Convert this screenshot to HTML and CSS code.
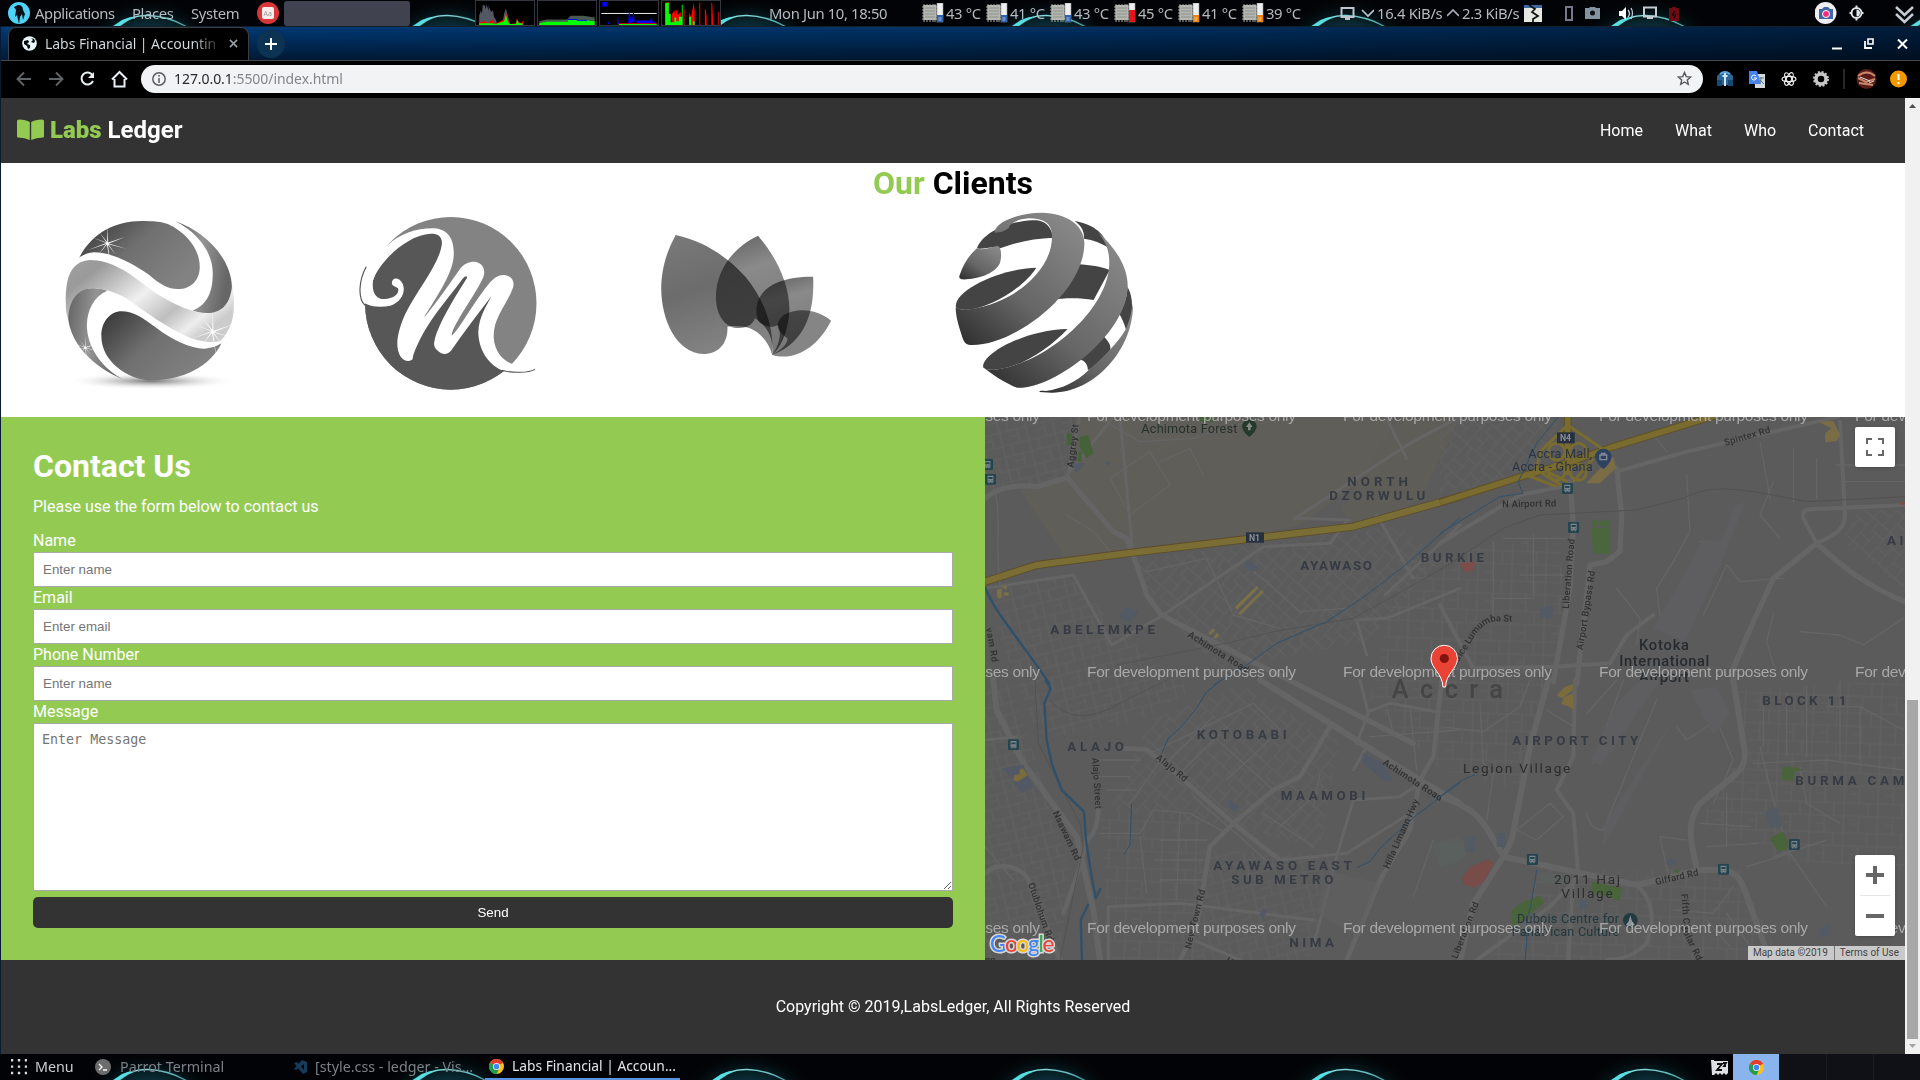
FILE: index.html
```html
<!DOCTYPE html>
<html lang="en">
<head>
<meta charset="utf-8">
<title>Labs Financial | Accounting</title>
<link rel="stylesheet" href="styles.css">
</head>
<body>
<svg class="defs" width="0" height="0" aria-hidden="true">
  <defs>
    <radialGradient id="halo"><stop offset=".45" stop-color="#0b2a36"/><stop offset=".62" stop-color="#06262b" stop-opacity=".75"/><stop offset="1" stop-color="#020a10" stop-opacity="0"/></radialGradient>
    <linearGradient id="ring" x1="0" x2="1"><stop offset="0" stop-color="#63f0f4"/><stop offset=".35" stop-color="#8ce0e2"/><stop offset="1" stop-color="#4fa5ab"/></linearGradient>
    <pattern id="wall" width="299.6" height="26" patternUnits="userSpaceOnUse">
      <rect width="300" height="26" fill="#020306"/>
      <ellipse cx="149" cy="45" rx="66" ry="46" fill="url(#halo)"/>
      <path d="M113 27Q130 15 148 15.500Q168 16 187 27" fill="none" stroke="url(#ring)" stroke-width="1.300"/>
      <path d="M112 27L122 20Q129 17 136 17Q126 21 119 27Z" fill="#58dfe3"/>
    </pattern>
    <symbol id="chip" viewBox="0 0 22 20">
      <path d="M2 1v18M5 1v18M8 1v18M11 1v18M13 1v18M0 4h15M0 7h15M0 10h15M0 13h15M0 16h15" stroke="#aaa" stroke-width="1"/>
      <rect x="1.500" y="2" width="13" height="15" fill="#b4b6b0"/><path d="M3 5h10M3 8h10M3 11h10M3 14h10" stroke="#8e908a"/>
      <rect x="15" y="0" width="6" height="19" fill="#eee" stroke="#999" stroke-width=".6"/>
      <path d="M15 12h6v7h-6z" fill="currentColor"/><path d="M16.500 14h3v4h-3z" fill="#fff" opacity=".3"/>
    </symbol>
    <symbol id="chrome" viewBox="0 0 16 16">
      <circle cx="8" cy="8" r="8" fill="#fbc116"/><path d="M8 8L1 4A8 8 0 0 1 15 4z" fill="#e33b2e"/><path d="M8 8L1 4A8 8 0 0 0 8 16L11 10z" fill="#229a4f"/><circle cx="8" cy="8" r="3.800" fill="#fff"/><circle cx="8" cy="8" r="3" fill="#4285f4"/>
    </symbol>
    <symbol id="bus" viewBox="0 0 34 34"><rect width="34" height="34" rx="4" fill="#24444f"/><path d="M8 6h18v20h-3v3h-3v-3h-6v3h-3v-3H8z" fill="#7f8588"/><path d="M10.500 10h13v6h-13z M11 20h3v3h-3z M20 20h3v3h-3z" fill="#24444f"/></symbol>
  </defs>
</svg>

<header class="panel panel-top">
  <svg class="wall"><rect width="1920" height="26" fill="url(#wall)"/></svg>
  <svg class="ico" width="22" height="22" viewBox="0 0 22 22"><circle cx="11" cy="11" r="11" fill="#4ed2f7"/><path d="M6 5L10 3Q15 3 15 8L17 12L15 18L14 12L12 15L11 22L9 13L7 15L8 8Z" fill="#071018"/></svg>
  <span class="fit">Applications</span>
  <span>Places</span>
  <span>System</span>
  <svg class="ico" width="22" height="22" viewBox="0 0 22 22"><circle cx="11" cy="11" r="11" fill="#d9363a"/><rect x="5" y="5" width="12" height="12" rx="2" fill="#f7ecec"/><text x="6.500" y="13.500" font-size="7" letter-spacing="0" fill="#999">Aa</text></svg>
  <i class="slot"></i>
  <svg class="graph" viewBox="0 0 60 26"><path d="M2 26V16L4 10L5 14L6 4L8 5L9 9L10 3L11 8L12 4V11L13 7L15 12L17 10L18 17L20 20L22 26M27 26L29 14L31 8L32 12L34 20L36 26" fill="#545864"/><path d="M2 26V23L8 22L12 24L16 20L19 25L29 20L31 13L32 16L34 21L36 25L42 24L43 18L44 22L48 24L50 20V26Z" fill="#f00"/><path d="M2 26V24L16 24L20 25L29 22L31 15L33 22L35 25L42 25L43 20L45 24L49 24V26Z" fill="#0f0"/></svg>
  <svg class="graph" viewBox="0 0 60 26"><path d="M0 22L8 20H30L34 16H48L60 18V26H0Z" fill="#4a5a50"/><path d="M0 24L8 22.500H31V20.500H45L60 22V26H0Z" fill="#0f0"/><path d="M31 20h10v1h10v1" stroke="#00f" fill="none"/></svg>
  <svg class="graph" viewBox="0 0 60 26"><path d="M0 13.500H60" stroke="#fff"/><path d="M1 1h5v5h-5zM7 25l1-3l1 3zM17 25l1-9l1 9zM29 25l1-15l1 5l2 8l2-14l1 12l3 3h21l-5-3l-1-4l-1 4H38" fill="#00f"/><path d="M19 24h41v1H19z" fill="#f00"/><path d="M19 25h41v1H19z" fill="#0f0"/></svg>
  <svg class="graph" viewBox="0 0 60 26"><path d="M3 26V2H5V1H6V26M9 26V15L12 10L13 15L14 9L16 15L19 12V26M22 26V9H23V26M28 26V12L30 17L33 2L34 12V26M39 26V2h1V26M45 26V9h1l1 9v8M52 26V2h1l1 20v4M59 26V12h1v14" fill="#f00"/><path d="M2 26V2H6V14H8V23H12V18H14V22H17V17H20V4H21V26M28 26V17H30V26M32 22h2v4h-2" fill="#0f0"/></svg>
  <span class="clock">Mon Jun 10, 18:50</span>
  <svg class="chip blue"><use href="#chip"/></svg><span>43 °C</span>
  <svg class="chip blue"><use href="#chip"/></svg><span>41 °C</span>
  <svg class="chip blue"><use href="#chip"/></svg><span>43 °C</span>
  <svg class="chip red"><use href="#chip"/><path d="M15 7h6v12h-6z" fill="#e3141c"/></svg><span>45 °C</span>
  <svg class="chip orange"><use href="#chip"/></svg><span>41 °C</span>
  <svg class="chip orange"><use href="#chip"/></svg><span>39 °C</span>
  <svg class="ico" width="34" height="20" viewBox="0 0 34 20" fill="none" stroke="#bcc5ce" stroke-width="2"><path d="M1.500 5h12v9h-12zM5 16h5"/><path d="M22 7l6 6l6-6" stroke-width="1.700"/></svg>
  <span class="rate">16.4 KiB/s</span>
  <svg class="ico" width="12" height="20" viewBox="0 0 12 20" fill="none" stroke="#aab" stroke-width="1.700"><path d="M0 13l6-6l6 6"/></svg>
  <span class="rate">2.3 KiB/s</span>
  <svg class="ico" width="18" height="17" viewBox="0 0 18 17"><path d="M0 0h18v17H0z" fill="#e8e8e2"/><path d="M0 0h18v3H0z" fill="#3d6aa6"/><path d="M5 0l6 4l-3 3l6 4l-5 3v3" fill="none" stroke="#111" stroke-width="1.700"/></svg>
  <svg class="ico" width="120" height="22" viewBox="0 0 120 22" fill="none" stroke="#c5ccd2" stroke-width="2"><path d="M1 5h6v13H1z" stroke="#778"/><path d="M20 6h4l1-1h5l1 1h4v11H20z" fill="#8493a0" stroke="none"/><circle cx="27.500" cy="11" r="2.500" fill="#111" stroke="none"/><path d="M54 9h3l4-4v13l-4-4h-3z" fill="#fff" stroke="none"/><path d="M63 8q3 4 0 7M66 6q3 5 0 11" stroke-width="1.300"/><path d="M79 5.500h12v9h-12zM82 16h6"/><path d="M104 6h3v-1h4v1h3v13h-10z" fill="#6c0c12" stroke="none"/><path d="M110 9l-3 4h4l-3 4" stroke="#000" stroke-width="1"/></svg>
  <svg class="ico" width="100" height="24" viewBox="0 0 100 24"><circle cx="10.500" cy="12" r="11" fill="#f0eef2"/><path d="M4 8h3l2-2h4l2 2h3v10H4z" fill="#4166a6"/><circle cx="11" cy="13" r="3.500" fill="#f02b80" stroke="#fff"/><circle cx="41.500" cy="12" r="5" fill="none" stroke="#dfe5ea" stroke-width="2"/><path d="M41.500 4.500v2M41.500 17.500v2M34.500 12h2M46.500 12h2" stroke="#dfe5ea" stroke-width="2"/><path d="M41.500 8.500v7a3.500 3.500 0 0 0 0-7" fill="#dfe5ea"/><path d="M81 6l8.500 8l8.500-8M81 13l8.500 8l8.500-8" stroke="#c4ccd4" stroke-width="2.500" fill="none"/></svg>
</header>

<div class="window">
  <div class="tabs">
    <div class="tab">
      <svg width="15" height="15" viewBox="0 0 15 15"><circle cx="7.500" cy="7.500" r="7.300" fill="#e9f6fa"/><path d="M2 5L6 4L7 6L5 8L8 9L8 12L6 13L5 10L2 8ZM9 2L11 4L9 6L12 7L13 5L12 3Z" fill="#050a10"/></svg>
      <span>Labs Financial | Accountin</span>
      <svg width="9" height="9" viewBox="0 0 10 10"><path d="M1 1l8 8M9 1l-8 8" stroke="#9aa0a6" stroke-width="1.700"/></svg>
    </div>
    <svg class="plus" width="28" height="28" viewBox="0 0 28 28"><circle cx="14" cy="14" r="14" fill="#0d3352"/><path d="M14 8v12M8 14h12" stroke="#fff" stroke-width="2"/></svg>
    <svg class="winbtns" width="76" height="12" viewBox="0 0 76 12" fill="none" stroke="#fff" stroke-width="2"><path d="M0 10.500h10"/><path d="M36 1h5v5h-5z" stroke-width="1.600"/><path d="M33 3v7h7" stroke-width="1.800"/><path d="M66 1.500l9 9M75 1.500l-9 9"/></svg>
  </div>
  <div class="toolbar">
    <svg width="112" height="18" viewBox="0 0 112 18" fill="none" stroke-width="2"><path d="M15 9H2M8 2.500L1.500 9L8 15.500M33 9h13M40 2.500L46.500 9L40 15.500" stroke="#626567" stroke-width="1.900"/><path d="M76.500 5A6 6 0 1 0 77 11" stroke="#e8f0f4"/><path d="M78 2v6h-6z" fill="#e8f0f4"/><path d="M96 9.500L103.500 2L111 9.500M98.500 9v7.500h10V9" stroke="#e8f0f4" stroke-width="2"/></svg>
    <div class="address">
      <svg width="14" height="14" viewBox="0 0 14 14" fill="none" stroke="#5a5e62" stroke-width="1.500"><circle cx="7" cy="7" r="6.200"/><path d="M7 6v5M7 3v1.700"/></svg>
      <span>127.0.0.1<em>:5500/index.html</em></span>
      <svg class="star" width="15" height="15" viewBox="0 0 15 15"><path d="M7.500 1.500l1.800 4.100 4.400.4-3.400 2.900 1 4.400-3.800-2.300-3.800 2.300 1-4.400L1.300 6l4.400-.4z" fill="none" stroke="#55595d" stroke-width="1.400"/></svg>
    </div>
    <svg class="ext" width="192" height="22" viewBox="0 0 192 22">
      <path d="M0 8Q8 0 16 8V17H0Z" fill="#2d6695"/><path d="M3 6Q8 2 13 6" stroke="#58a8e8" stroke-width="2" fill="none"/><path d="M0 12h5v6H0zM11 12h5v6h-5z" fill="#174a72"/><path d="M8 5v13M5.500 8h5" stroke="#cdeaff" stroke-width="2"/>
      <path d="M38 6h10v14H38z" fill="#d5d9dd"/><path d="M32 3h8l4 13H32z" fill="#4384ee"/><path d="M39 8a2.500 2.500 0 1 0 .5 2h-2.500" stroke="#fff" fill="none"/><path d="M42 10h5M44 9v2q0 3-2 5M43 12l4 4" stroke="#677" fill="none"/>
      <g fill="none" stroke="#eee" stroke-width="1.200"><ellipse cx="72" cy="11" rx="7" ry="2.700"/><ellipse cx="72" cy="11" rx="7" ry="2.700" transform="rotate(60 72 11)"/><ellipse cx="72" cy="11" rx="7" ry="2.700" transform="rotate(120 72 11)"/></g>
      <circle cx="104" cy="11" r="5" fill="none" stroke="#c8c8c8" stroke-width="3.500"/><circle cx="104" cy="11" r="7" fill="none" stroke="#c8c8c8" stroke-width="2" stroke-dasharray="2 1.700"/>
      <path d="M127 1v20" stroke="#3c4043" stroke-width="1.300"/>
      <circle cx="149.500" cy="11" r="10" fill="#5c1a1a"/><path d="M141 8Q150 1 158 8M141 10l8 4l9-3M142 15l14 2" stroke="#c88a6a" stroke-width="2" fill="none"/><path d="M143 9l10 4M152 15l5-2" stroke="#ddd"/>
      <circle cx="181.500" cy="11" r="8.500" fill="#f29900"/><path d="M181.500 6v6M181.500 14v2" stroke="#fff" stroke-width="2"/>
    </svg>
  </div>

  <div class="viewport">
    <div class="page">
      <nav class="nav">
        <h1 class="brand"><svg width="27" height="21" viewBox="0 0 27 21"><path d="M0 2Q0 .7 2 .6Q9 .8 12.800 3V21Q8 18.500 1 18.500Q0 18.500 0 17ZM27 2Q27 .7 25 .6Q18 .8 14.200 3V21Q19 18.500 26 18.500Q27 18.500 27 17Z" fill="#93cb52"/></svg><span><b class="green">Labs</b> Ledger</span></h1>
        <div class="links"><a>Home</a><a>What</a><a>Who</a><a>Contact</a></div>
      </nav>

      <section class="clients">
        <h2><span class="green">Our</span> Clients</h2>
        <div class="logos">
          <svg viewBox="2.600 30 784 651" preserveAspectRatio="none">
            <defs>
              <linearGradient id="a1" x1="0" y1="0" x2="1" y2=".6"><stop offset="0" stop-color="#333"/><stop offset=".5" stop-color="#707070"/><stop offset="1" stop-color="#828282"/></linearGradient>
              <linearGradient id="a2" x1="0" y1="0" x2="1" y2=".6"><stop offset="0" stop-color="#a0a0a0"/><stop offset=".18" stop-color="#9a9a9a"/><stop offset=".3" stop-color="#b8b8b8"/><stop offset=".52" stop-color="#f0f0f0"/><stop offset=".74" stop-color="#bebebe"/><stop offset=".9" stop-color="#eee"/><stop offset="1" stop-color="#ccc"/></linearGradient>
              <linearGradient id="a3" x1="0" y1="0" x2="1" y2=".25"><stop offset="0" stop-color="#606060"/><stop offset=".5" stop-color="#959595"/><stop offset="1" stop-color="#666"/></linearGradient>
              <radialGradient id="a4"><stop offset="0" stop-color="#777"/><stop offset=".5" stop-color="#ccc" stop-opacity=".7"/><stop offset="1" stop-color="#fff" stop-opacity="0"/></radialGradient>
              <path id="spark" d="M0-62L2-3L54-22L4 1L60 20L3 3L25 40L1 5L10 80L-2 4L-28 40L-4 2L-62 24L-4-1L-50-22L-3-3L-25-38L-1-5Z"/>
            </defs>
            <ellipse cx="395" cy="573" rx="225" ry="26" fill="url(#a4)"/>
            <path fill="url(#a1)" d="M207 203C240 130 300 93 370 93C400 93 425 95 440 103C490 130 522 180 522 230C522 270 500 297 465 297C440 297 420 285 390 255C340 215 290 187 245 187C230 189 215 195 207 203Z"/>
            <path fill="url(#a2)" d="M172 340C171 260 185 215 235 210C290 210 340 250 380 287C430 330 480 355 503 362C515 368 530 369 545 369C580 366 600 335 606 285C612 310 612 345 610 370C607 405 590 440 575 453C560 460 520 455 490 440C430 410 380 365 330 325C290 300 260 294 240 295C205 298 185 330 177 385C173 370 172 355 172 340Z"/>
            <path fill="url(#a3)" d="M458 94C540 125 605 210 606 290C602 340 580 370 540 369C525 368 515 365 503 362C540 345 556 310 556 250C556 190 520 130 458 94Z"/>
            <path fill="url(#a3)" d="M178 385C182 320 210 296 240 295C255 294 268 297 280 302C245 320 228 360 227 405C227 470 265 535 325 570C240 530 185 460 178 385Z"/>
            <path fill="url(#a1)" d="M265 440C263 395 290 364 317 364C350 364 375 385 410 415C450 450 500 477 535 476C555 474 570 466 579 460C550 530 475 571 400 571C330 571 265 510 265 440Z"/>
            <g fill="#fff"><use href="#spark" transform="translate(281 160) scale(.85)"/><use href="#spark" transform="translate(556 425)"/><use href="#spark" transform="translate(223 473) scale(.55)"/></g>
          </svg>
          <svg viewBox="786.600 30 784 651" preserveAspectRatio="none">
            <clipPath id="disc"><ellipse cx="1178" cy="340" rx="224" ry="259"/></clipPath>
            <ellipse cx="1178" cy="340" rx="224" ry="259" fill="#838383"/>
            <path clip-path="url(#disc)" fill="#575757" d="M1005 175C1060 110 1150 110 1168 150L1165 220L1110 380L1215 250L1235 260L1180 440L1285 310L1270 420C1275 480 1300 510 1340 530L1310 550L1300 640H940V175Z"/>
            <path d="M935 215L1012 165L985 240L950 350L935 345Z" fill="#fff"/>
            <path fill="#fff" d="M1010 168C1045 130 1090 114 1135 115C1175 118 1190 155 1185 205C1180 260 1130 340 1108 382C1130 355 1170 290 1200 240C1215 215 1235 213 1245 216C1262 222 1270 240 1263 262C1240 320 1190 390 1180 437C1200 420 1230 350 1275 285C1290 262 1305 254 1318 255C1338 258 1345 272 1341 292C1325 345 1290 380 1290 440C1292 490 1320 515 1340 522C1362 537 1385 543 1398 538C1370 548 1340 549 1312 541C1270 520 1250 470 1250 425C1252 380 1270 350 1285 317C1250 370 1210 430 1180 480C1170 495 1160 493 1152 489C1140 480 1132 470 1135 455C1145 400 1190 320 1220 265C1222 253 1212 260 1205 272C1165 335 1110 400 1080 495L1078 508C1070 517 1055 513 1047 500C1030 470 1040 420 1060 370C1090 300 1150 220 1155 160C1155 135 1140 130 1125 131C1060 135 990 220 975 270C970 310 985 328 1005 327C1030 326 1045 310 1040 295C1035 290 1025 290 1024 280C1024 265 1035 262 1045 270C1065 290 1055 335 1020 347C985 355 950 348 942 325C935 290 960 210 1010 168Z"/>
            <path d="M957 230C938 270 934 325 954 346M1312 541C1340 550 1380 549 1398 538" fill="none" stroke="#555" stroke-width="3"/>
          </svg>
          <svg viewBox="2.600 120 784 651" preserveAspectRatio="none" class="leaf">
            <defs><linearGradient id="l1" x1="0" y1="0" x2=".3" y2="1"><stop offset="0" stop-color="#7a7a7a"/><stop offset=".5" stop-color="#6c6c6c"/><stop offset="1" stop-color="#828282"/></linearGradient>
            <linearGradient id="l2" x1="0" y1="0" x2=".2" y2="1"><stop offset="0" stop-color="#606060"/><stop offset=".35" stop-color="#8a8a8a"/><stop offset="1" stop-color="#777"/></linearGradient></defs>
            <path fill="url(#l1)" d="M198 225C280 245 340 300 380 350C430 420 455 500 450 585C440 540 410 505 375 500C355 497 340 497 333 500C335 550 310 582 270 582C200 580 160 480 160 385C160 320 180 260 198 225Z"/>
            <path fill="url(#l2)" d="M413 227C460 290 495 370 495 450C492 520 470 565 450 585C455 540 440 500 405 475C395 505 370 505 350 503C320 495 302 455 303 410C303 330 350 260 413 227Z"/>
            <path fill="url(#l2)" d="M557 350C560 430 550 540 450 585C470 550 475 520 465 495C450 505 430 500 415 485C400 450 400 350 557 350Z"/>
            <path fill="#858585" d="M604 482C570 560 510 605 450 585C480 565 490 550 490 535C460 510 455 490 480 465C520 440 570 450 604 482Z"/>
          </svg>
          <svg viewBox="786.600 120 784 651" preserveAspectRatio="none">
            <defs><linearGradient id="g1" x1="0" y1="1" x2=".8" y2="0"><stop offset="0" stop-color="#2b2b2b"/><stop offset=".45" stop-color="#666"/><stop offset="1" stop-color="#878787"/></linearGradient></defs>
            <g fill="#444">
              <path d="M985 265C1000 220 1060 185 1130 181C1150 180 1170 185 1180 215L1185 233C1130 235 1080 250 1045 265C1030 255 1000 270 985 265Z"/>
              <path d="M1240 183C1280 190 1320 215 1327 262C1310 250 1290 240 1265 236C1266 210 1255 195 1240 183Z"/>
              <path d="M1250 313C1280 315 1310 320 1332 330L1290 420C1250 412 1210 415 1180 419C1210 390 1240 350 1250 313Z"/>
              <path d="M1378 380C1395 410 1395 470 1375 510C1370 490 1362 470 1357 462C1370 435 1378 410 1378 380Z"/>
              <path d="M1315 528C1330 545 1340 560 1330 580C1310 600 1290 625 1275 630C1275 610 1262 598 1248 598C1275 575 1297 555 1315 528Z"/>
              <path d="M930 440C925 390 1050 325 1140 323C1110 380 1020 445 960 449C945 450 932 447 930 440Z"/>
              <path d="M1001 620C1000 580 1110 510 1222 507C1170 570 1090 630 1025 629C1010 628 1003 626 1001 620Z"/>
            </g>
            <g fill="url(#g1)">
              <path d="M1032 218C1028 190 1090 158 1155 158C1220 160 1265 195 1266 250C1265 400 1080 560 968 555C955 555 950 545 945 525C935 490 928 460 930 440C935 450 955 450 970 447C1080 430 1185 330 1181 225C1180 190 1160 175 1120 175C1090 178 1070 190 1068 205C1055 215 1045 218 1032 218Z"/>
              <path d="M985 265C1000 272 1020 262 1040 257C1050 265 1050 290 1045 310C1030 345 980 360 945 358C938 355 938 350 940 345C950 310 965 285 985 265Z"/>
              <path d="M1300 215C1345 260 1380 320 1379 380C1375 530 1180 690 1090 683C1060 670 1020 640 1001 620C1005 630 1025 630 1045 627C1180 600 1345 430 1330 290C1328 260 1315 235 1300 215Z"/>
              <path d="M1393 430C1395 570 1290 700 1180 698L1148 696C1148 692 1155 692 1165 693C1210 685 1245 665 1275 632C1330 580 1365 530 1375 505C1385 480 1390 450 1393 430Z"/>
            </g>
          </svg>
        </div>
      </section>

      <section class="contact">
        <form class="form">
          <h2>Contact Us</h2>
          <p>Please use the form below to contact us</p>
          <label>Name</label><input type="text" placeholder="Enter name">
          <label>Email</label><input type="text" placeholder="Enter email">
          <label>Phone Number</label><input type="text" placeholder="Enter name">
          <label>Message</label><textarea placeholder="Enter Message"></textarea>
          <button type="button">Send</button>
        </form>
        <div class="map">
          <svg class="tiles" viewBox="985 417 920 543">
            <defs>
              <pattern id="s1" width="31" height="22" patternUnits="userSpaceOnUse" patternTransform="rotate(-48)"><path d="M0 1H31M1 0V22M12 1V14M22 8V22M1 13H22M22 8H31" class="lane"/></pattern>
              <pattern id="s2" width="27" height="25" patternUnits="userSpaceOnUse" patternTransform="rotate(-14)"><path d="M0 1H27M1 0V25M10 1V12M19 12V25M1 12H27M10 18H19" class="lane"/></pattern>
              <pattern id="s3" width="34" height="30" patternUnits="userSpaceOnUse" patternTransform="rotate(2)"><path d="M0 1H34M1 0V30M16 1V18M25 18V30M1 18H34M8 9H16" class="lane"/></pattern>
              <path id="lumumba" d="M38 770L100 670Q128 622 165 619L250 620"/>
            </defs>
            <rect x="985" y="417" width="920" height="543" fill="#5b5b5b"/>
            <path d="M1075 417H1390L1402 450L1300 525L1240 540L1065 557L1020 490L1060 480L1077 460Z" fill="#605e59"/>
            <path d="M1400 417H1460L1420 500L1360 530L1340 510Z" fill="#5f5d58"/>
            <path d="M985 417H1075L1068 478L1000 490L985 480Z" fill="url(#s2)"/>
            <path d="M1135 560L1400 525L1440 560L1370 640L1220 670L1150 600Z" fill="url(#s1)"/>
            <path d="M990 590L1070 575L1130 640L1190 690L1140 720L1040 740L1000 640Z" fill="url(#s2)"/>
            <path d="M1150 720L1240 685L1340 740L1320 850L1250 830L1110 810Z" fill="url(#s1)"/>
            <path d="M1100 810L1200 820L1195 960H1110Z" fill="url(#s3)"/>
            <path d="M1200 850L1335 855L1310 960H1190Z" fill="url(#s2)"/>
            <path d="M985 690L1010 680L1070 870L1060 960H985Z" fill="url(#s2)"/>
            <path d="M1400 560L1560 535L1565 620L1520 790L1440 770L1370 700Z" fill="url(#s3)"/>
            <path d="M1730 690L1905 680V870L1790 860L1700 820L1750 740Z" fill="url(#s3)"/>
            <path d="M1860 510H1905V590L1840 540Z" fill="url(#s1)"/>
            <path d="M1545 870L1740 870L1780 960H1480Z" fill="url(#s3)"/>
            <path d="M1440 417H1560L1540 470L1440 500Z" fill="url(#s1)"/>

            <!-- north-west quarter -->
            <g transform="translate(980 415) scale(.33333)">
              <path class="road" stroke-width="16" d="M15 250C60 210 130 210 170 215L262 188L400 350L440 370L470 450L500 540L545 600L640 650L1300 985"/>
              <path class="road" stroke-width="9" d="M262 188L300 0M262 180L400 5M15 520L280 480L395 690L550 600L850 395L1050 385L1100 320M460 430L420 5M1190 300L1300 490M1215 540L1440 330M1440 520L1220 610L1130 615L1160 720M945 310L1290 85L1440 5M945 310L1110 315M1215 0L1280 130"/>
              <path class="road" stroke-width="4" d="M390 190L510 110L570 210L450 300ZM260 300L340 350L400 420M500 470L680 430L760 600L900 640M540 140L630 100L670 180M60 510C40 380 80 240 15 170M780 440L860 500L960 590L1100 580M850 5L640 70L480 80L350 5"/>
              <path d="M410 750L760 680L880 650L1120 610L1300 510L1440 430" fill="none" stroke="#535353" stroke-width="3"/>
              <path d="M15 500L170 450L440 415L820 370L1120 335L1440 245" fill="none" stroke="#5c4b2b" stroke-width="24"/>
              <path d="M15 500L170 450L440 415L820 370L1120 335L1440 245" fill="none" stroke="#7a6e34" stroke-width="19"/>
              <path d="M15 515C40 590 140 700 210 810" class="water" stroke-width="7"/>
              <path d="M1440 308L1270 455L1160 540L1040 620L890 685L800 750L700 810" class="water" stroke-width="3"/>
              <path d="M260 55h15v35h-15zM300 65L325 60L340 115L320 130L298 95ZM295 110h10v30h-12zM660 0h40v20h-40z" fill="#446138"/>
              <path d="M275 145L315 145L290 175ZM810 435L835 460L815 470L790 450ZM440 575L475 590L450 620L415 605ZM375 140L390 140L385 155Z" fill="#525a66"/>
              <path d="M50 525l15-5v30h-12zM65 515l15-5v15zM72 532h14v10h-14zM765 575l65-62l6 6l-65 66zM775 595l70-70l7 6l-70 68zM685 655l15-15l5 6l-14 15zM700 668l10-14l8 6l-10 12z" fill="#7b7046"/>
              <rect x="798" y="352" width="54" height="31" fill="#27303f"/><text x="807" y="377" font-size="26" fill="#8a8f96" font-weight="700">N1</text>
              <path d="M786 35a22 22 0 0 1 44 0q-2 15-22 31q-20-16-22-31" fill="#263a2b"/><path d="M808 22l10 14h-6v10h-8V36h-6z" fill="#818a83"/>
              <text class="poi green-poi" x="484" y="53" textLength="288">Achimota Forest</text>
              <text class="st" transform="translate(280 158) rotate(-83)" textLength="130">Aggrey St</text>
              <text class="area" x="1102" y="214" textLength="182">NORTH</text><text class="area" x="1048" y="256" textLength="288">DZORWULU</text>
              <text class="area" x="961" y="466" textLength="215">AYAWASO</text>
              <text class="area" x="211" y="658" textLength="314">ABELEMKPE</text>
              <text class="area" x="1322" y="441" textLength="190">BURKIE</text>
              <text class="st" transform="translate(622 664) rotate(32)" textLength="208">Achimota Road</text>
              <text class="st" transform="translate(18 640) rotate(80)" textLength="104">vam Rd</text>
              <use href="#bus" x="6" y="132" width="33" height="33"/><use href="#bus" x="15" y="176" width="33" height="34"/>
            </g>

            <!-- north-east quarter -->
            <g transform="translate(1440 415) scale(.33333)">
              <path class="road" stroke-width="16" d="M390 200L400 330L390 520L340 800M1395 560C1270 510 1190 440 1130 385L1000 490L940 620L880 760V810M530 160L545 300L540 410L500 440L450 450L410 810"/>
              <path class="road" stroke-width="12" d="M530 170L740 110L1195 5M0 385L240 240L390 210M1200 20L1215 300C1215 350 1170 365 1130 385M1130 385L1090 310Q1085 285 1110 283L1395 270M0 570L100 760L340 755L510 745L560 660L640 600"/>
              <path class="road" stroke-width="4" d="M740 180L750 350L700 440L650 520L660 600M780 380L860 380L900 270M880 290V310M1030 490L900 500L860 450L790 600M530 520L600 610L590 690M1000 200L960 300L1020 370M1000 750L980 680L1000 600M1080 650L1200 660L1270 690L1390 610M680 110L640 60M960 80L990 250M1060 100V260M1130 130V250M1190 150H1395M1210 200H1395M240 480H370M160 380V620M190 370H380M280 360V550M160 550H280"/>
              <path d="M885 270L915 262L845 440L735 680L640 640L760 430L790 370L845 380Z" fill="#5e5e60"/>
              <path d="M0 465L190 340L300 300L590 285L730 250C820 200 920 225 1100 260L1395 245" fill="none" stroke="#515153" stroke-width="3"/>
              <g fill="none" stroke="#5e5129" stroke-width="23"><path d="M0 263L260 180L380 145L520 95L830 0M383 0V180"/></g>
              <g fill="none" stroke="#7a6c2f" stroke-width="17"><path d="M0 263L260 180L380 145L520 95L830 0M383 0V180"/></g>
              <g fill="none" stroke="#7a6c2f" stroke-width="9"><path d="M383 30L300 110L290 165L380 220M383 30L500 110M383 200L300 160M260 180L350 215M400 200L460 130"/><circle cx="350" cy="110" r="25"/><circle cx="415" cy="110" r="25"/><circle cx="350" cy="172" r="24"/><circle cx="415" cy="172" r="24"/></g>
              <path d="M438 205L500 140L520 125L528 160L480 205ZM1135 20L1180 18L1200 60L1190 78L1155 82L1155 55L1175 40Z" fill="#7a6d45"/>
              <path d="M355 5L290 85L235 200L248 235L180 245L90 300L0 355" class="water" stroke-width="3"/>
              <path d="M457 315h15v20h-15zM480 318l28-4v20h-28zM455 340L508 336V417L460 415Z" fill="#4a663c"/>
              <path d="M57 445L105 440L100 465L80 473ZM1380 262h16v7h-16z" fill="#7d4e49"/><path d="M302 575h38l-5 35l-35-3z" fill="#545a63"/>
              <path d="M465 126a25 25 0 0 1 50 0q-3 18-25 37q-22-19-25-37" fill="#2e4260"/><path d="M480 120h20v14h-20zM485 120v-5h10v5" fill="none" stroke="#828b97" stroke-width="4"/>
              <rect x="351" y="52" width="53" height="33" fill="#27303f"/><text x="360" y="78" font-size="26" fill="#8a8f96" font-weight="700">N4</text>
              <text class="poi" x="265" y="129" textLength="192">Accra Mall,</text><text class="poi" x="216" y="168" textLength="242">Accra - Ghana</text>
              <text class="st" transform="translate(187 277) rotate(-1)" textLength="162">N Airport Rd</text>
              <text class="st" transform="translate(856 92) rotate(-16)" textLength="142">Spintex Rd</text>
              <text class="st" transform="translate(386 582) rotate(-85)" textLength="210">Liberation Road</text>
              <text class="st" transform="translate(428 706) rotate(-81)" textLength="240">Airport Bypass Rd</text>
              <text class="st"><textPath href="#lumumba">Patrice Lumumba St</textPath></text>
              <text class="town" x="597" y="704" textLength="150">Kotoka</text><text class="town" x="538" y="752" textLength="270">International</text><text class="town" x="597" y="800" textLength="150">Airport</text>
              <text class="area" x="1341" y="390" textLength="86">AIR</text>
              <use href="#bus" x="365" y="203" width="34" height="34"/><use href="#bus" x="384" y="320" width="34" height="34"/>
            </g>

            <!-- south-west quarter -->
            <g transform="translate(980 680) scale(.33333)">
              <path class="road" stroke-width="18" d="M40 0L50 90L130 250L290 470L340 690L360 840M840 0L1050 130L1320 300L1440 370"/>
              <path class="road" stroke-width="14" d="M1385 0L1360 230L1320 300L1290 450L1200 600L1100 840M1050 140L960 290L880 330L760 430L690 500L670 620L650 740L600 840M430 205L500 208L600 290L760 430L900 540M15 580C60 540 130 560 150 610L240 840M320 480L300 560L250 700M320 480Q355 460 355 370"/>
              <path class="road" stroke-width="9" d="M1140 0L1165 100L1130 190M1165 95L1230 70L1370 95M1120 360L1070 530L1000 800M1120 360L1260 350L1320 310M900 540L1100 520L1290 400M385 840V680L600 670L1000 720M15 180L110 170M1120 270L1160 200M640 780L780 840"/>
              <path class="road" stroke-width="4" d="M510 220L820 70L900 150L740 300M640 350L780 470L880 560M560 250L700 110M600 280L740 140M690 160L880 330M450 370L550 230M340 240H480M340 290H450M380 330H470M360 460H480L520 390L630 400L740 460M480 470L500 640M540 480H680M520 540H670M540 600H670M600 400L590 660M15 500L100 600M1220 80L1240 160M1290 80L1310 270M1170 170L1440 150M1360 480L1300 650M850 400L1000 500M1000 350L900 440M1020 280L1000 380"/>
              <path d="M165 0L175 190L300 430L310 500L240 840M210 60C270 130 350 110 420 70L560 0" fill="none" stroke="#525252" stroke-width="3"/>
              <path d="M195 0L212 25L193 70L200 180L215 250L245 330L312 395L318 480L330 560L347 655L362 625M325 672L302 720L306 840" class="water" stroke-width="7"/>
              <path d="M725 0L680 35L650 85L600 145L565 175L545 220M455 370L450 495L430 525M1440 308L1310 405L1270 440L1200 505L1170 545L1130 563" class="water" stroke-width="3"/>
              <path d="M70 265L130 255L160 320L125 340ZM750 360L780 380L765 395L742 380ZM1150 220L1210 250L1240 300L1215 305L1145 245ZM850 685l12 10l-15 20l-10-10z" fill="#525964"/>
              <path d="M118 270l10-5l15 20l-30 20l-14-5l5-15l16-3z" fill="#7b6d3b"/><path d="M1355 490L1440 470V550L1380 560Z" fill="#5a5f5d"/>
              <path class="dense" d="M1040 570L1200 610L1130 770L1010 700Z"/>
              <text class="city" x="1235" y="53" textLength="334">Accra</text>
              <text class="area" x="262" y="213" textLength="170">ALAJO</text><text class="area" x="650" y="177" textLength="270">KOTOBABI</text><text class="area" x="902" y="360" textLength="254">MAAMOBI</text>
              <text class="area" x="700" y="570" textLength="415">AYAWASO EAST</text><text class="area" x="754" y="612" textLength="306">SUB METRO</text><text class="area" x="928" y="801" textLength="134">NIMA</text>
              <text class="st" transform="translate(526 236) rotate(39)" textLength="112">Alajo Rd</text><text class="st" transform="translate(336 234) rotate(86)" textLength="154">Alajo Street</text>
              <text class="st" transform="translate(218 398) rotate(65)" textLength="160">Nsawam Rd</text><text class="st" transform="translate(144 612) rotate(71)" textLength="184">Otublohum Rd</text>
              <text class="st" transform="translate(1207 252) rotate(33)" textLength="206">Achimota Road</text><text class="st" transform="translate(1226 568) rotate(-66)" textLength="225">Hilla Limann Hwy</text>
              <text class="st" transform="translate(632 808) rotate(-76)" textLength="182">New Town Rd</text><text class="st" x="15" y="848">nn</text><text class="st" transform="translate(735 845) rotate(35)">Hill</text>
              <use href="#bus" x="84" y="177" width="33" height="34"/>
            </g>

            <!-- south-east quarter -->
            <g transform="translate(1440 680) scale(.33333)">
              <path class="road" stroke-width="18" d="M325 0L270 200L215 480L190 530L100 670L60 840M12 354C90 380 120 410 150 460L190 530L400 575L590 615L780 570H840Q890 570 910 620L990 840M880 0L910 190Q925 250 890 280L780 370C730 440 760 500 770 570"/>
              <path class="road" stroke-width="12" d="M405 0L400 230L350 330L400 400L415 590L330 680L110 840M590 615Q640 660 635 730L620 790Q570 840 500 840M400 600L385 840"/>
              <path class="road" stroke-width="4" d="M0 140L130 155L240 80L270 0M120 70L130 250L160 280L140 420M320 90L400 140M440 100L530 0M460 250L550 0M440 400Q450 450 490 450L650 60M710 140L740 180L830 120L880 240L820 370M960 200L1000 360L1040 500M1080 260L1100 370L1200 430M940 250L1160 240L1390 270M780 430L930 440M800 500L950 490M860 340V500M880 620L820 700L700 690M660 470L740 480M660 470L690 610M230 450L330 370L370 410L290 480ZM1000 530L1100 500L1160 480M860 700L960 840M800 720L870 800M920 560L1050 520L1160 680M970 70V200M1040 40V230M1100 20V230M1160 80H1260V240M1200 0V240M1260 80L1390 150"/>
              <path d="M530 70L600 0H660L480 260L455 240ZM750 30L830 20L870 100L820 165ZM485 510L495 430L690 130L710 100Z" fill="#5e5e61"/>
              <path d="M350 45L375 20L400 12V30L365 55ZM370 52L400 40V85L365 72ZM382 75l17-5v20z" fill="#7a6c3c"/>
              <path d="M65 595L90 560L145 538L162 550L135 600L105 624L70 612Z" fill="#784c48"/>
              <path d="M215 690L250 665L300 647L312 670L230 735H215ZM455 605L545 625L538 662L455 635ZM988 475L1030 455L1045 490L1042 508L1015 515ZM1027 262h35l28 8l-28 5v28l-36-4zM702 572l14-4v14z" fill="#49643a"/>
              <path d="M975 395L1010 380L1025 440L990 440ZM75 470h30v45h-30zM170 460h25v40h-25zM680 535h28v20h-28zM420 660h20v28h-20zM1140 745l30-12v35l-30 5z" fill="#535a63"/>
              <path d="M0 490L70 480L80 530L0 560ZM290 580L380 580V605L310 610Z" fill="#5a605d"/>
              <path d="M0 350C50 310 70 295 105 285M290 570L272 680L260 720V790L255 840" class="water" stroke-width="3"/>
              <text class="area" x="967" y="75" textLength="252">BLOCK 11</text><text class="area" x="217" y="195" textLength="378">AIRPORT CITY</text><text class="area" x="1066" y="315" textLength="364">BURMA CAMP</text>
              <text class="vil" x="69" y="279" textLength="322">Legion Village</text><text class="vil" x="342" y="612" textLength="198">2011 Haj</text><text class="vil" x="364" y="654" textLength="154">Village</text>
              <text class="poi teal" x="231" y="728" textLength="306">Dubois Centre for</text><text class="poi teal" x="215" y="768" textLength="323">Panafrican Culture</text>
              <circle cx="571" cy="721" r="22" fill="#233b40"/><path d="M571 706l5 18l9 12h-28l9-12z" fill="#8b989b"/>
              <text class="st" transform="translate(648 615) rotate(-13)" textLength="132">Giffard Rd</text><text class="st" transform="translate(52 838) rotate(-69)" textLength="180">Liberation Rd</text>
              <text class="st" transform="translate(724 642) rotate(86)" textLength="110">Fifth Cir</text><text class="st" transform="translate(722 742) rotate(64)" textLength="112">cular Rd</text>
              <use href="#bus" x="260" y="521" width="34" height="34"/><use href="#bus" x="834" y="551" width="33" height="34"/><use href="#bus" x="1046" y="477" width="34" height="33"/>
            </g>

            <g class="mark">
              <text x="831" y="421" textLength="209">For development purposes only</text><text x="1087" y="421" textLength="209">For development purposes only</text><text x="1343" y="421" textLength="209">For development purposes only</text><text x="1599" y="421" textLength="209">For development purposes only</text><text x="1855" y="421" textLength="209">For development purposes only</text>
              <text x="831" y="677" textLength="209">For development purposes only</text><text x="1087" y="677" textLength="209">For development purposes only</text><text x="1343" y="677" textLength="209">For development purposes only</text><text x="1599" y="677" textLength="209">For development purposes only</text><text x="1855" y="677" textLength="209">For development purposes only</text>
              <text x="831" y="933" textLength="209">For development purposes only</text><text x="1087" y="933" textLength="209">For development purposes only</text><text x="1343" y="933" textLength="209">For development purposes only</text><text x="1599" y="933" textLength="209">For development purposes only</text><text x="1855" y="933" textLength="209">For development purposes only</text>
            </g>
            <path d="M1431 658.500a13 13 0 0 1 26.500 0c0 10-11.500 15-12 28.500h-2.500c-.5-13.500-12-18.500-12-28.500Z" fill="#ea4335" stroke="#fff" stroke-width="1"/><circle cx="1444.300" cy="658.500" r="4.600" fill="#811411"/>
          </svg>
          <div class="google"><span class="b">G</span><span class="r">o</span><span class="y">o</span><span class="b">g</span><span class="g">l</span><span class="r">e</span></div>
          <div class="ctl full"><svg width="18" height="18" viewBox="0 0 18 18"><path d="M1 6V1H6M12 1H17V6M17 12V17H12M6 17H1V12" fill="none" stroke="#666" stroke-width="2"/></svg></div>
          <div class="ctl zoom"><svg width="18" height="18" viewBox="0 0 18 18"><path d="M9 0V18M0 9H18" stroke="#666" stroke-width="4"/></svg><i></i><svg width="18" height="18" viewBox="0 0 18 18"><path d="M0 9H18" stroke="#666" stroke-width="4"/></svg></div>
          <div class="legal"><span>Map data ©2019</span><span>Terms of Use</span></div>
        </div>
      </section>
      <footer>Copyright © 2019,LabsLedger, All Rights Reserved</footer>
    </div>
    <div class="scroll"><svg width="7" height="4" viewBox="0 0 7 4"><path d="M3.500 0L7 4H0z" fill="#505050"/></svg><i></i><svg width="7" height="4" viewBox="0 0 7 4"><path d="M3.500 4L7 0H0z" fill="#a3a3a3"/></svg></div>
  </div>
</div>

<footer class="panel panel-bottom">
  <svg class="wall"><rect width="1920" height="26" fill="url(#wall)"/></svg>
  <svg class="ico" width="16" height="16" viewBox="0 0 16 16"><path d="M1 0v16M8 0v16M15 0v16" stroke="#d8dde2" stroke-width="2.400" stroke-dasharray="2.400 4"/></svg>
  <span class="light">Menu</span>
  <svg class="ico" width="16" height="16" viewBox="0 0 16 16"><circle cx="8" cy="8" r="8" fill="#6c6c6c"/><path d="M4 5l3 3l-3 3M8 11h4" fill="none" stroke="#fff" stroke-width="1.300"/></svg>
  <span class="dim">Parrot Terminal</span>
  <svg class="ico" width="14" height="14" viewBox="0 0 14 14"><path d="M0 3l3-1l7 8V4L2 10L0 9l8-9l5 2v10l-4 2z" fill="#163c5c"/></svg>
  <span class="dim">[style.css - ledger - Vis...</span>
  <div class="task"><svg width="15" height="15"><use href="#chrome"/></svg><span>Labs Financial | Accoun...</span></div>
  <svg class="ico" width="18" height="17" viewBox="0 0 18 17"><path d="M0 1h3v15H1M3 2h14v12l-2 2l-2-2l-2 2l-2-2l-2 2l-2-2l-2 2z" fill="#dcdfe4"/><path d="M6 5h5l-5 6h5M12 4h3l-2 3h2" stroke="#111" stroke-width="1.800" fill="none"/></svg>
  <div class="pager"><svg width="15" height="15"><use href="#chrome"/></svg></div>
  <i class="desk"></i><i class="desk"></i><i class="desk"></i>
</footer>
</body>
</html>
```

FILE: styles.css
```css
* { box-sizing: border-box; margin: 0; padding: 0; }
html, body { width: 1920px; height: 1080px; overflow: hidden; }
body { display: flex; flex-direction: column; background: #0a1a33; font-family: Roboto, sans-serif; font-size: 16px; }
svg { display: block; flex: none; }
.defs { position: absolute; }
.green { color: #93cb52; }

/* desktop panels */
.panel { position: relative; display: grid; align-items: center; height: 26px; flex: none; background: #020306; color: #b4bac0; font: 14.5px/26px "Noto Sans", sans-serif; white-space: nowrap; }
.panel > * { position: relative; }
.panel > .wall { position: absolute; left: 0; top: 0; width: 1920px; height: 26px; }
.panel-top { padding-left: 8px; grid-template-columns: 27px 97px 59px 66px 27px 191px 62px 62px 62px 108px 153px 24px 40px 24px 40px 24px 40px 24px 40px 24px 40px 24px 74px 37px 70px 15px 62px 41px 250px 100px; }
.panel-top > span { font-size: 14.8px; letter-spacing: -.35px; }
.panel-top > .fit { letter-spacing: -.45px; }
.panel-top > .rate { letter-spacing: -.3px; }
.slot { display: block; width: 126px; height: 25px; background: #40434f; border-radius: 3px; }
.graph { width: 60px; height: 26px; background: #000; border: 1px solid #34363e; }
.chip { width: 22px; height: 20px; }
.blue { color: #2f62ac; } .red { color: #e3141c; } .orange { color: #ee8206; }

/* browser window */
.window { height: 1028px; margin-left: 1px; display: flex; flex-direction: column; background: #000; }
.tabs { height: 35px; display: flex; align-items: center; background: linear-gradient(to bottom, transparent, rgba(0,6,14,.62)), linear-gradient(to right, #003b78, #003266 50%, #001d3c); border-top: 1px solid #12202c; border-bottom: 1px solid #46484a; }
.tab { height: 33px; width: 241px; margin: 0 8px 0 7px; padding: 0 10px 2px 13px; display: flex; align-items: center; gap: 8px; background: #000; border: 1px solid #3c4046; border-bottom: 0; border-radius: 8px 8px 0 0; font: 14px "Noto Sans", sans-serif; white-space: nowrap; }
.tab span { flex: 1; width: 174px; overflow: hidden; letter-spacing: -.05px; color: transparent; background: linear-gradient(to right, #d5dde2 84%, #101010); background-clip: text; -webkit-background-clip: text; }
.winbtns { margin: 0 12px 0 auto; }
.toolbar { height: 37px; display: flex; align-items: center; padding: 0 0 2px 15px; }
.address { width: 1562px; height: 28px; margin: 0 14px 0 13px; padding: 0 11px; border-radius: 14px; background: #f1f3f4; display: flex; align-items: center; gap: 8px; font: 14px "Noto Sans", sans-serif; color: #27292c; letter-spacing: -.06px; }
.address em { font-style: normal; color: #83878b; }
.star { margin-left: auto; }
.viewport { height: 956px; display: flex; background: #fff; }
.page { width: 1904px; }
.scroll { width: 15px; background: #f1f1f1; display: flex; flex-direction: column; align-items: center; padding: 6px 0; }
.scroll i { width: 11px; height: 339px; margin: auto 0 5px; background: #a8a8a8; }

/* site */
.nav { height: 65px; background: #333; color: #fff; display: flex; align-items: center; justify-content: space-between; padding: 0 41px 0 16px; }
.brand { display: flex; align-items: center; gap: 6px; padding-bottom: 2px; font-size: 24px; line-height: 28px; }
.links { display: flex; gap: 32px; }
.clients h2 { height: 37px; line-height: 41px; font-size: 32px; text-align: center; }
.logos { display: flex; height: 217px; }
.logos svg { width: 300px; height: 217px; }
.leaf path { mix-blend-mode: multiply; }
.contact { display: flex; height: 543px; }
.form { width: 984px; padding: 30px 32px 0; background: #93cb52; color: #fff; display: flex; flex-direction: column; }
.form h2 { font-size: 32px; line-height: 38px; }
.form p { margin-top: 12px; line-height: 20px; height: 30px; }
.form label { height: 22px; line-height: 21px; }
.form p + label { height: 25px; line-height: 27px; }
.form input { height: 35px; border: 1px solid #a9a9a9; padding: 0 9px; font: 13.333px "Liberation Sans", sans-serif; background: #fff; }
.form textarea { height: 168px; border: 1px solid #a9a9a9; padding: 8px; font: 13.333px "DejaVu Sans Mono", monospace; background: #fff; }
.form ::placeholder { color: #757575; }
.form button { height: 31px; margin-top: 6px; border: 0; border-radius: 5px; background: #333; color: #fff; font: 13.333px "Liberation Sans", sans-serif; }
.map { position: relative; width: 920px; height: 543px; overflow: hidden; background: #5b5b5b; }
.tiles { width: 920px; height: 543px; }
.lane { fill: none; stroke: #616161; stroke-width: 1.200; }
.road { fill: none; stroke: #656565; stroke-linejoin: round; stroke-linecap: round; }
.water { fill: none; stroke: #2e506b; stroke-linejoin: round; }
.dense { fill: #616161; opacity: .6; }
.tiles text { font-family: Roboto, sans-serif; }
.tiles .area { font-size: 40px; font-weight: 700; fill: #363a42; }
.tiles .poi { font-size: 38px; fill: #2b3442; }
.tiles .green-poi { fill: #26302a; }
.tiles .teal { fill: #20383d; }
.tiles .st { font-size: 28px; fill: #303030; font-weight: 500; }
.tiles .town { font-size: 44px; fill: #262b30; font-weight: 500; }
.tiles .vil { font-size: 41px; fill: #2c2c2c; }
.tiles .city { font-size: 76px; font-weight: 500; fill: #454545; }
.tiles .mark text { font: 15.5px "Liberation Sans", sans-serif; fill: #a8a8a8; }
.google { position: absolute; left: 5px; top: 512px; font: 500 22.500px/30px Lato, sans-serif; letter-spacing: -1.300px; -webkit-text-stroke: 3px #d8d8d8; paint-order: stroke fill; }
.google .b { color: #4285f4; } .google .r { color: #ea4335; } .google .y { color: #fbbc05; } .google .g { color: #34a853; }
.ctl { position: absolute; right: 10px; width: 40px; background: #fff; border-radius: 2px; display: flex; flex-direction: column; align-items: center; justify-content: center; box-shadow: 0 1px 4px -1px rgba(0,0,0,.3); }
.full { top: 10px; height: 40px; }
.zoom { top: 438px; height: 81px; gap: 11px; }
.zoom i { width: 30px; height: 1px; background: #e6e6e6; }
.legal { position: absolute; right: 0; bottom: 0; height: 14px; display: flex; font-size: 10px; line-height: 14px; color: #444; }
.legal span { background: #c9c9c9; padding: 0 6px 0 5px; }
.legal span + span { border-left: 1px solid #777; }
.page > footer { height: 94px; background: #333; color: #fff; text-align: center; line-height: 93px; }

.panel-bottom { font-size: 14.3px; padding-left: 11px; grid-template-columns: 24px 60px 25px 174px 21px 170px 1226px 22px 46px 47px 47px 47px; }
.light { color: #c8ccd0; } .dim { color: #7b8087; }
.task { display: flex; align-items: center; gap: 8px; width: 195px; height: 26px; padding: 0 4px; font-size: 13.8px; color: #e2e5e8; border-bottom: 2px solid #5a94e0; }
.pager { height: 26px; background: #8ab4ee; display: grid; place-items: center; }
.desk { height: 26px; background: #101116; border-left: 1px solid #1a1b20; }
```
